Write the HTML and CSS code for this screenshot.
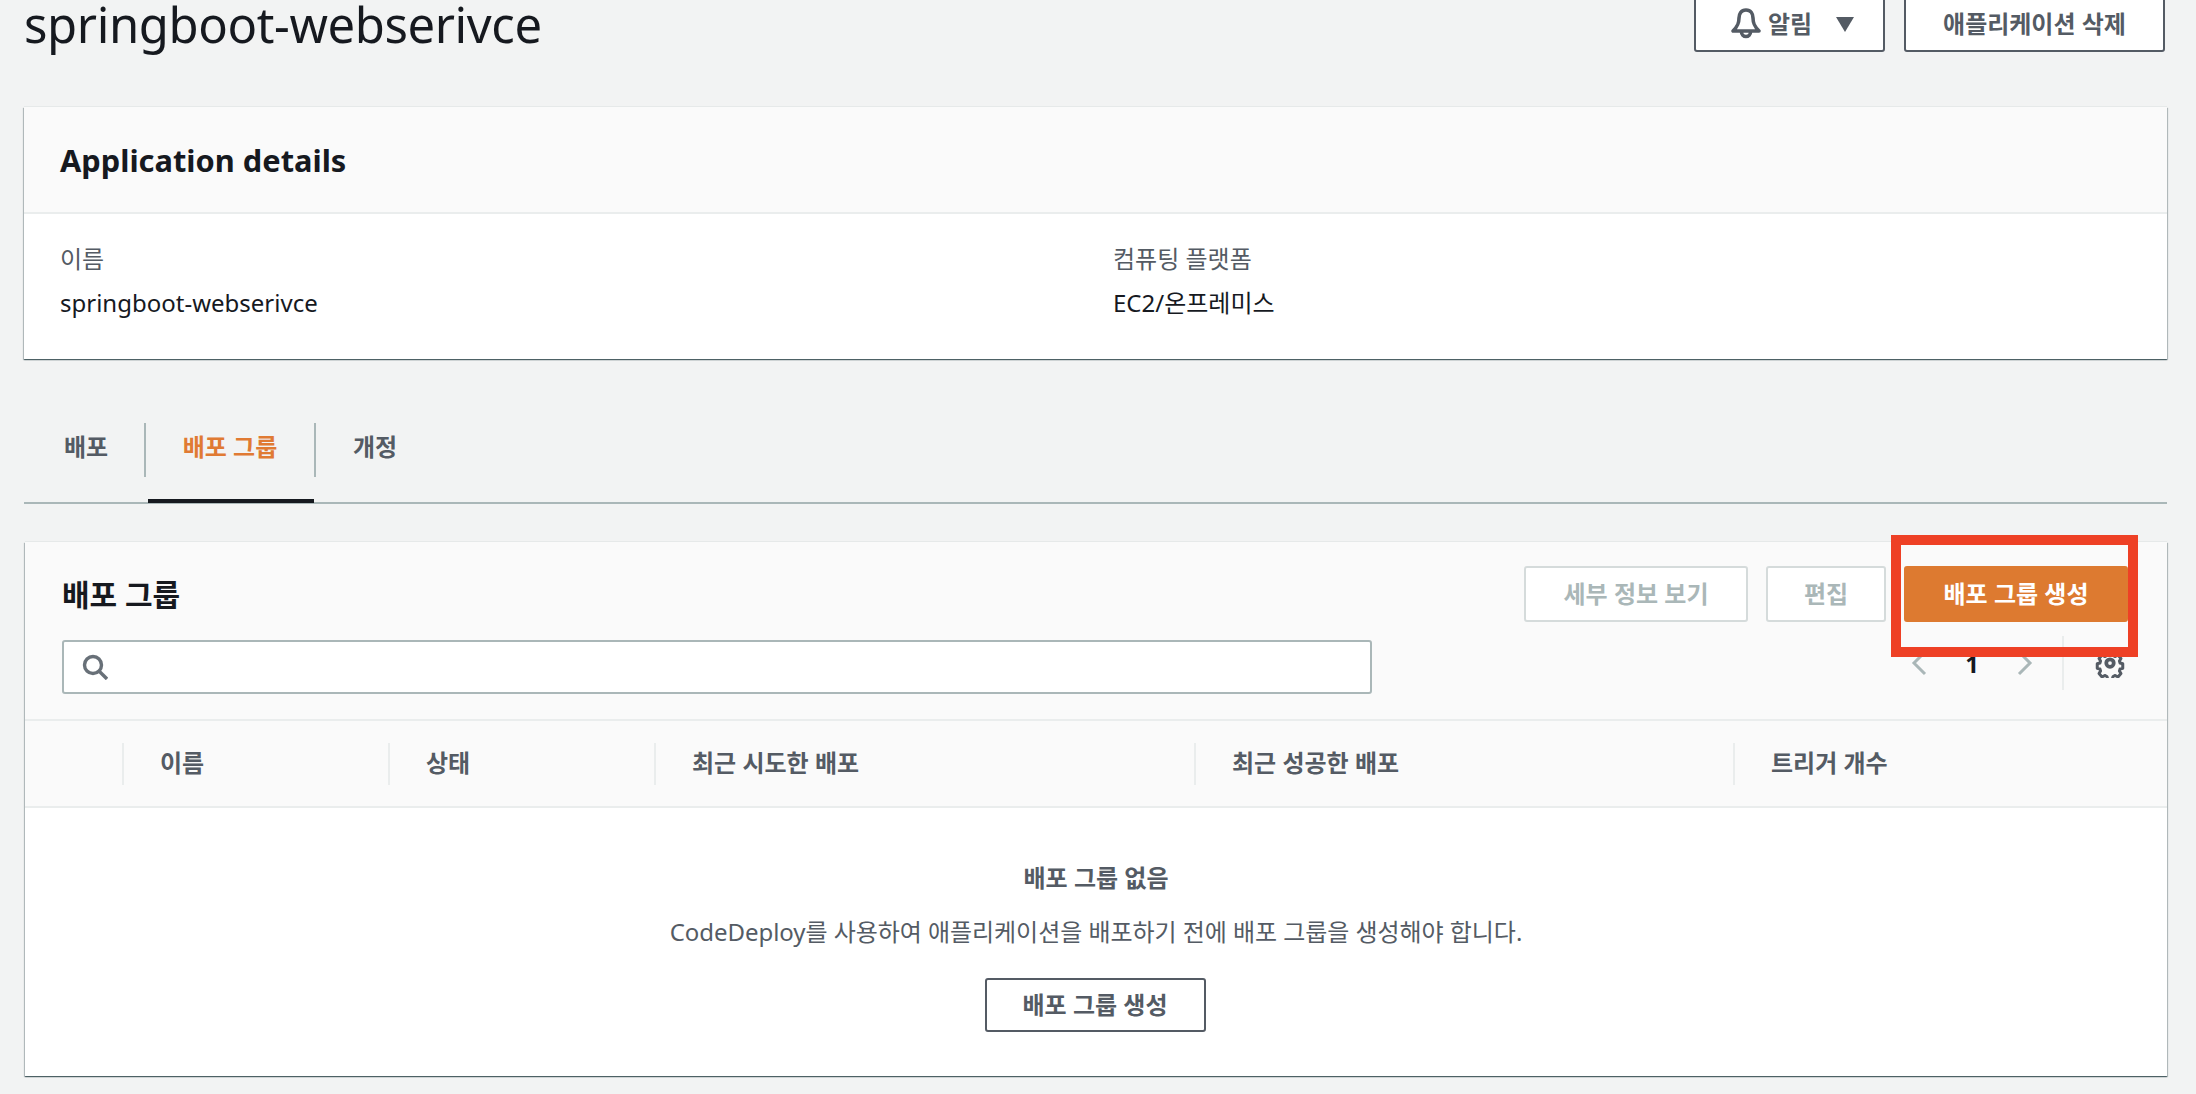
FILE: index.html
```html
<!DOCTYPE html>
<html lang="ko">
<head>
    <meta charset="UTF-8">
    <title>springboot-webserivce</title>
    <link rel="stylesheet" href="styles.css">
</head>
<body>
    <!-- 페이지 헤더 -->
    <header class="page-head">
        <h1>springboot-webserivce</h1>
        <div class="head-actions">
            <button class="btn btn-notify">
                <svg class="bell" viewBox="0 0 32 32" width="32" height="32" fill="none" stroke="#545b64" stroke-width="3.600" stroke-linejoin="round">
                    <path d="M16 3c-5 0-7 4-7 8 0 5-1 8-6 13h26c-5-5-6-8-6-13 0-4-2-8-7-8z"/>
                    <path d="M11.500 25a4.500 4.500 0 0 0 9 0"/>
                </svg>
                <span>알림</span>
                <i class="caret"></i>
            </button>
            <button class="btn btn-delete">애플리케이션 삭제</button>
        </div>
    </header>

    <!-- 애플리케이션 정보 -->
    <section class="card details">
        <div class="card-head">
            <h2>Application details</h2>
        </div>
        <div class="details-body">
            <div class="field">
                <div class="label">이름</div>
                <div class="value">springboot-webserivce</div>
            </div>
            <div class="field">
                <div class="label">컴퓨팅 플랫폼</div>
                <div class="value">EC2/온프레미스</div>
            </div>
        </div>
    </section>

    <!-- 탭 -->
    <nav class="tabs">
        <a class="tab tab-first">배포</a>
        <a class="tab tab-active">배포 그룹</a>
        <a class="tab tab-last">개정</a>
    </nav>

    <!-- 배포 그룹 목록 -->
    <section class="card groups">
        <div class="groups-head">
            <div class="groups-row">
                <h2>배포 그룹</h2>
                <div class="groups-actions">
                    <button class="btn btn-disabled btn-view">세부 정보 보기</button>
                    <button class="btn btn-disabled btn-edit">편집</button>
                    <button class="btn btn-primary">배포 그룹 생성</button>
                </div>
            </div>
            <div class="filter-row">
                <div class="search">
                    <svg viewBox="0 0 26 26" width="26" height="26" fill="none" stroke="#687078" stroke-width="3.400">
                        <circle cx="11" cy="11" r="8.500"/>
                        <path d="M17 17l8 8"/>
                    </svg>
                </div>
                <div class="pager">
                    <svg viewBox="0 0 16 26" width="16" height="26" fill="none" stroke="#aab7b8" stroke-width="3"><path d="M14 2L3 13l11 11"/></svg>
                    <span class="page-num">1</span>
                    <svg viewBox="0 0 16 26" width="16" height="26" fill="none" stroke="#aab7b8" stroke-width="3"><path d="M2 2l11 11L2 24"/></svg>
                    <span class="pager-line"></span>
                    <svg viewBox="0 0 32 32" width="30" height="30" fill="none" stroke="#545b64" stroke-width="4" stroke-linejoin="round">
                        <path d="M13 2h6l1 4 3 1.400 3.600-2 4 4.600-2 3.400.8 2.600 3.600 1v6l-3.600 1-.8 2.600 2 3.400-4 4.600-3.600-2-3 1.400-1 4h-6l-1-4-3-1.400-3.600 2-4-4.600 2-3.400-.8-2.600-3.600-1v-6l3.600-1 .8-2.600-2-3.400 4-4.600 3.600 2 3-1.400z" transform="translate(3.200 3.200) scale(.8)"/>
                        <circle cx="16" cy="16" r="4"/>
                    </svg>
                </div>
            </div>
        </div>

        <div class="table-head">
            <div class="th th-check"></div>
            <div class="th th-name">이름</div>
            <div class="th th-state">상태</div>
            <div class="th th-tried">최근 시도한 배포</div>
            <div class="th th-success">최근 성공한 배포</div>
            <div class="th th-trigger">트리거 개수</div>
        </div>

        <div class="empty">
            <div class="empty-title">배포 그룹 없음</div>
            <p>CodeDeploy를 사용하여 애플리케이션을 배포하기 전에 배포 그룹을 생성해야 합니다.</p>
            <button class="btn btn-create">배포 그룹 생성</button>
        </div>

        <!-- 빨간 강조 표시 -->
        <div class="highlight"></div>
    </section>
</body>
</html>
```

FILE: styles.css
```css
/* 기본 */
body {
    margin: 0;
    padding: 0 29px 0 24px;
    height: 1094px;
    box-sizing: border-box;
    overflow: hidden;
    background-color: #f2f3f3;
    color: #16191f;
    font-family: "Noto Sans", "Noto Sans CJK KR", sans-serif;
    font-size: 24px;
}

h1, h2, p {
    margin: 0;
}

/* 버튼 */
.btn {
    box-sizing: border-box;
    height: 56px;
    padding: 0 0 3px;
    border: 2px solid #545b64;
    border-radius: 3px;
    background: #fff;
    color: #545b64;
    font-family: inherit;
    font-size: 24px;
    font-weight: 700;
}

/* 헤더 */
.page-head {
    display: flex;
    justify-content: space-between;
    height: 111px;
}

.page-head h1 {
    font-size: 49px;
    font-weight: 400;
    line-height: 50px;
    margin-top: -1px;
    letter-spacing: -0.4px;
}

.head-actions {
    display: flex;
    gap: 19px;
    margin-top: -4px;
    margin-right: 2px;
}

.btn-notify {
    width: 191px;
    display: flex;
    align-items: center;
    padding-left: 34px;
}

.bell {
    margin-right: 6px;
    width: 32px;
    height: 32px;
}

.caret {
    width: 0;
    height: 0;
    margin-left: 24px;
    margin-top: 3px;
    border-left: 9px solid transparent;
    border-right: 9px solid transparent;
    border-top: 15px solid #545b64;
}

.btn-delete {
    width: 261px;
}

/* 카드 */
.card {
    background: #fff;
    box-shadow: 0 -1px 0 0 #e6e9e9, 0 1px 1px 0 rgba(0, 28, 36, 0.5), 1px 1px 1px 0 rgba(0, 28, 36, 0.2), -1px 1px 1px 0 rgba(0, 28, 36, 0.2);
}

.details {
    height: 252px;
    margin-top: -4px;
}

.card-head {
    box-sizing: border-box;
    height: 107px;
    padding: 0 36px;
    display: flex;
    align-items: center;
    background: #fafafa;
    border-bottom: 2px solid #eaeded;
}

.card-head h2 {
    font-size: 30.800px;
    font-weight: 700;
}

.details-body {
    display: grid;
    grid-template-columns: 1053px 1fr;
    padding: 28px 36px 0;
}

.label {
    color: #545b64;
    line-height: 34px;
}

.value {
    margin-top: 10px;
    line-height: 34px;
}

/* 탭 */
.tabs {
    display: flex;
    height: 145px;
    box-sizing: border-box;
    padding-top: 64px;
    border-bottom: 2px solid #aab7b8;
    align-items: flex-start;
}

.tab {
    box-sizing: border-box;
    height: 54px;
    padding-top: 7px;
    line-height: 34px;
    font-weight: 700;
    color: #545b64;
    text-align: center;
}

.tab-first {
    width: 122px;
    padding-right: 2px;
    padding-left: 40px;
    text-align: left;
    border-right: 2px solid #aab7b8;
}

.tab-active {
    position: relative;
    width: 170px;
    color: #e07a33;
    border-right: 2px solid #aab7b8;
}

.tab-active::after {
    content: "";
    position: absolute;
    left: 2px;
    right: 0;
    top: 76px;
    height: 4px;
    background: #16191f;
}

.tab-last {
    padding-left: 37px;
    text-align: left;
}

/* 배포 그룹 */
.groups {
    position: relative;
    margin: 38px 0 0 1px;
    height: 534px;
}

.groups-head {
    box-sizing: border-box;
    height: 179px;
    padding: 24px 36px 0 37px;
    background: #fafafa;
    border-bottom: 2px solid #eaeded;
}

.groups-row {
    display: flex;
    justify-content: space-between;
    align-items: center;
    height: 56px;
}

.groups-row h2 {
    font-size: 30px;
    font-weight: 700;
    margin-top: -3px;
}

.groups-actions {
    display: flex;
    gap: 18px;
    margin-right: 3px;
}

.btn-disabled {
    border-color: #d5dbdb;
    color: #aab7b8;
}

.btn-view {
    width: 224px;
}

.btn-edit {
    width: 120px;
}

.btn-primary {
    width: 224px;
    border-color: #dd7a30;
    background: #dd7a30;
    color: #fff;
}

.filter-row {
    display: flex;
    justify-content: space-between;
    margin-top: 18px;
}

.search {
    box-sizing: border-box;
    width: 1310px;
    height: 54px;
    padding: 12px 18px;
    background: #fff;
    border: 2px solid #aab7b8;
    border-radius: 3px;
}

.pager {
    display: flex;
    align-items: center;
    height: 54px;
    margin: -4px 6px 0 0;
}

.page-num {
    width: 32px;
    margin: 0 29px;
    text-align: center;
    font-weight: 700;
}

.pager-line {
    width: 2px;
    height: 54px;
    margin: 0 31px 0 29px;
    background: #eaeded;
}

/* 표 머리글 */
.table-head {
    box-sizing: border-box;
    display: grid;
    grid-template-columns: 97px 266px 266px 540px 539px 1fr;
    height: 87px;
    align-items: center;
    background: #fafafa;
    border-bottom: 2px solid #eaeded;
}

.th {
    box-sizing: border-box;
    height: 42px;
    line-height: 40px;
    padding-left: 36px;
    border-left: 2px solid #eaeded;
    font-weight: 700;
    color: #545b64;
}

.th-check {
    border-left: none;
}

/* 비어 있음 */
.empty {
    display: flex;
    flex-direction: column;
    align-items: center;
    padding-top: 53px;
    color: #545b64;
}

.empty-title {
    line-height: 34px;
    font-weight: 700;
}

.empty p {
    margin-top: 20px;
    line-height: 34px;
    letter-spacing: -0.05px;
}

.btn-create {
    width: 221px;
    height: 54px;
    margin: 29px 2px 0 0;
}

/* 강조 표시 */
.highlight {
    position: absolute;
    left: 1866px;
    top: -7px;
    width: 247px;
    height: 122px;
    box-sizing: border-box;
    border: 10px solid #ee4025;
}
```
